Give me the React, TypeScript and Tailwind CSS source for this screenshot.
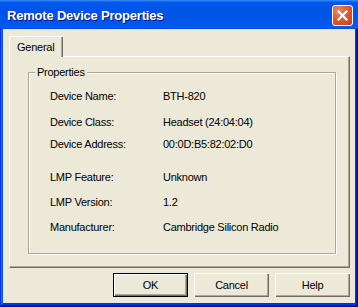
export default function App() {
  const rows: { label: string; value: string; mt: string }[] = [
    { label: "Device Name:", value: "BTH-820", mt: "mt-0" },
    { label: "Device Class:", value: "Headset (24:04:04)", mt: "mt-[12px]" },
    { label: "Device Address:", value: "00:0D:B5:82:02:D0", mt: "mt-[8px]" },
    { label: "LMP Feature:", value: "Unknown", mt: "mt-[19px]" },
    { label: "LMP Version:", value: "1.2", mt: "mt-[11px]" },
    { label: "Manufacturer:", value: "Cambridge Silicon Radio", mt: "mt-[11px]" },
  ];
  return (
    <div className="w-[358px] h-[307px] flex flex-col bg-[#0831d9] shadow-[inset_-1px_-1px_0_#00138c,inset_1px_1px_0_#0831d9,inset_-2px_-2px_0_#001ea0,inset_2px_2px_0_#166aee,inset_-3px_-3px_0_#003bda,inset_3px_3px_0_#0855dd] font-['Liberation_Sans',Arial,sans-serif] text-[11px] tracking-[-0.25px] text-black overflow-hidden">
      {/* Title bar */}
      <div className="h-[29px] shrink-0 flex items-start pl-[7px] pr-[5px] bg-[linear-gradient(180deg,#3d8cf5,#0058ee_8%,#0054e3_40%,#0058ec_88%,#0060f5_93%,#005bff_95%,#0048e0_96%,#0048e0)]">
        <div className="mt-[8px] text-white font-bold text-[13px] tracking-[-0.2px] leading-[16px] [text-shadow:1px_1px_0_#0f1089]">
          Remote Device Properties
        </div>
        <div className="ml-auto mt-[5px] w-[21px] h-[21px] rounded-[3px] border border-white bg-[radial-gradient(circle_at_30%_25%,#f08a63_0%,#e2592f_45%,#d04a22_80%,#c2401c)] flex items-center justify-center">
          <svg width="11" height="11" viewBox="0 0 11 11">
            <path d="M1.5 1.5 L9.5 9.5 M9.5 1.5 L1.5 9.5" stroke="white" strokeWidth="2.2" strokeLinecap="square" />
          </svg>
        </div>
      </div>

      {/* Body */}
      <div className="flex-1 mx-[3px] mb-[4px] bg-[#ece9d8] flex flex-col pt-[7px] pl-[6px] pr-[5px]">
        {/* Tab strip */}
        <div className="flex">
          <div className="relative z-10 -mb-px h-[21px] w-[54px] bg-[#ece9d8] border-t border-l border-white rounded-tl-[2px] shadow-[inset_-1px_0_0_#716f64,inset_-2px_0_0_#aca899] flex items-center pl-[7px] leading-[14px]">
            General
          </div>
        </div>
        {/* Panel */}
        <div className="h-[212px] border-t border-l border-white border-r border-b border-r-[#716f64] border-b-[#716f64] shadow-[inset_-1px_-1px_0_#aca899] pt-[15px] pl-[18px]">
          <div className="relative w-[308px] h-[182px] border border-[#aca899] shadow-[inset_1px_1px_0_#fff,1px_1px_0_#fff] pt-[16px] pl-[21px]">
            <div className="absolute left-[6px] top-[-8px] px-[2px] bg-[#ece9d8] leading-[14px]">Properties</div>
            {rows.map((r) => (
              <div key={r.label} className={`flex leading-[14px] ${r.mt}`}>
                <div className="w-[113px]">{r.label}</div>
                <div>{r.value}</div>
              </div>
            ))}
          </div>
        </div>
        {/* Buttons */}
        <div className="mt-[5px] flex justify-end gap-[6px]">
          <button className="w-[75px] h-[24px] bg-[#ece9d8] border border-black shadow-[inset_1px_1px_0_#fff,inset_-1px_-1px_0_#716f64,inset_-2px_-2px_0_#aca899] flex items-center justify-center leading-[14px]">
            OK
          </button>
          <button className="w-[75px] h-[24px] bg-[#ece9d8] shadow-[inset_1px_1px_0_#fff,inset_-1px_-1px_0_#716f64,inset_-2px_-2px_0_#aca899] flex items-center justify-center leading-[14px]">
            Cancel
          </button>
          <button className="w-[75px] h-[24px] bg-[#ece9d8] shadow-[inset_1px_1px_0_#fff,inset_-1px_-1px_0_#716f64,inset_-2px_-2px_0_#aca899] flex items-center justify-center leading-[14px]">
            Help
          </button>
        </div>
      </div>
    </div>
  );
}
